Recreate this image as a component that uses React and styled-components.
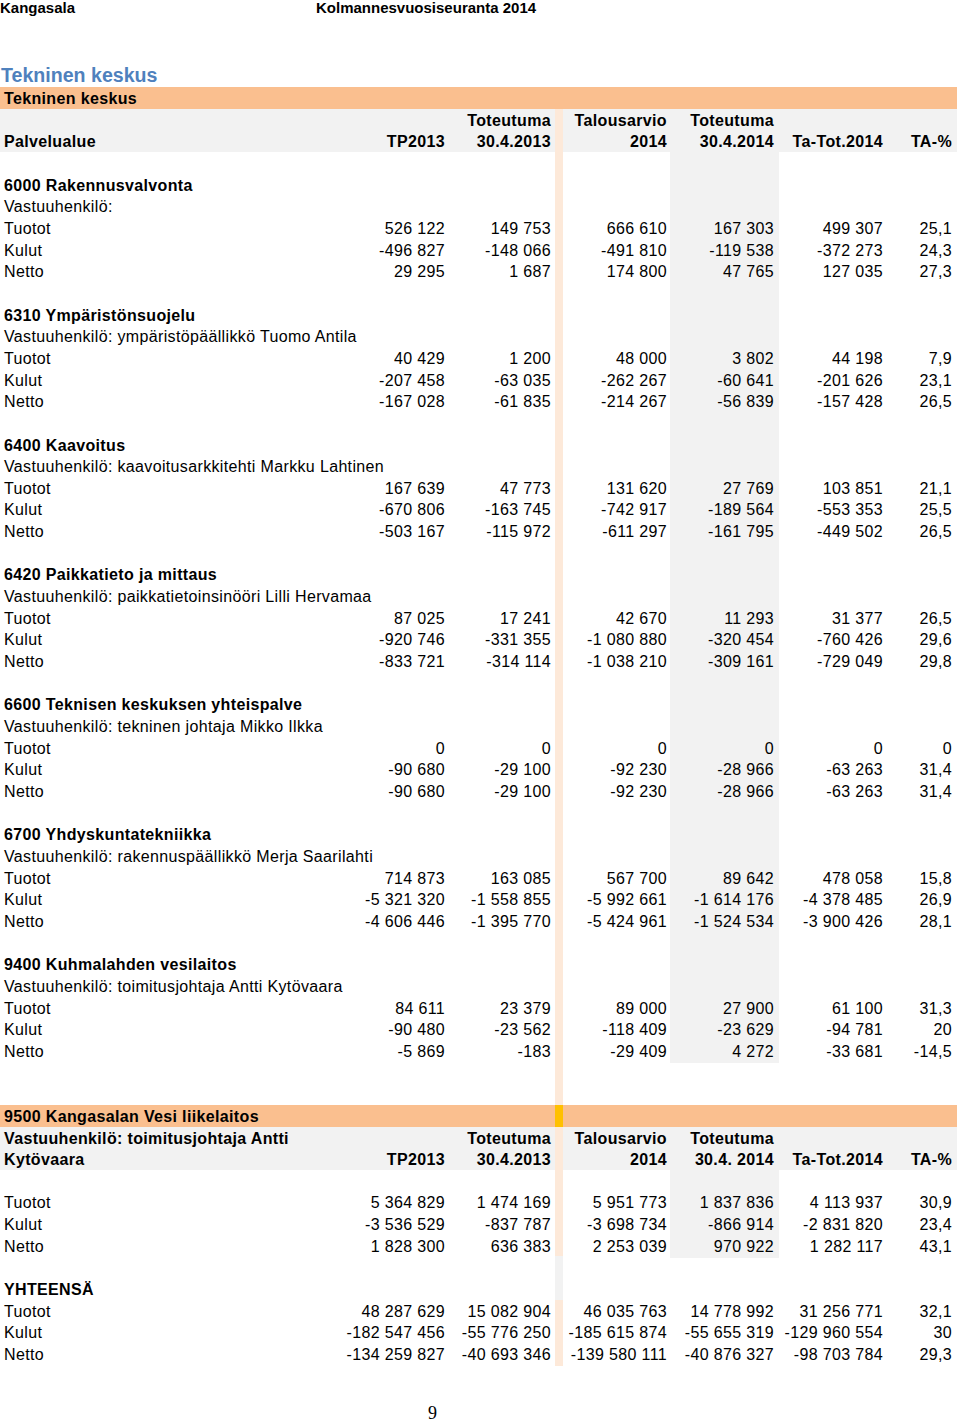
import React from 'react'
import styled, { createGlobalStyle } from 'styled-components'

const GlobalStyle = createGlobalStyle`
  body {
    margin: 0;
    background: #fff;
    color: #000;
    font-family: "Liberation Sans", Arial, sans-serif;
  }
`

const ROW_H = '21.67px'
const PEACH = '#fde9d9'
const ORANGE = '#fabf8f'
const GOLD = '#ffc000'
const GREY = '#f2f2f2'
const PADS = [4, 4, 3, 5, 4, 5]

const Page = styled.div`
  width: 960px;
  min-height: 1421px;
`

const TopBar = styled.div`
  display: grid;
  grid-template-columns: 316px auto;
  font-size: 15px;
  font-weight: 700;
  line-height: 15px;
`

const Title = styled.h1`
  margin: 49px 0 0 1px;
  font-size: 19.6px;
  line-height: 23px;
  font-weight: 700;
  color: #4f81bd;
`

const Sheet = styled.div`
  width: 957px;
  font-size: 16px;
  letter-spacing: 0.35px;
`

const Line = styled.div`
  display: grid;
  grid-template-columns: 340px 109px 106px 8px 107px 109px 108px 70px;
  height: ${ROW_H};
  line-height: 23px;
  background: ${p => (p.$kind === 'band' ? ORANGE : p.$kind === 'head' ? GREY : 'transparent')};
  font-weight: ${p => (p.$kind === 'data' ? 400 : 700)};
`

const Label = styled.div`
  padding-left: 4px;
  white-space: nowrap;
  font-weight: ${p => (p.$bold ? 700 : 'inherit')};
`

const Value = styled.div`
  text-align: right;
  white-space: nowrap;
  padding-right: ${p => p.$pad}px;
  background: ${p => (p.$shade ? GREY : 'transparent')};
`

const Strip = styled.div`
  background: ${p => p.$tone};
`

const PageNumber = styled.div`
  margin-top: 38px;
  padding-left: 428px;
  font-family: "Liberation Serif", "Times New Roman", serif;
  font-size: 18px;
  line-height: 20px;
`

function SheetRow ({ label = '', values = [], kind = 'data', bold, shade, tone = PEACH }) {
  const cells = [0, 1, 2, 3, 4, 5].map(i => values[i] ?? '')
  return (
    <Line $kind={kind}>
      <Label $bold={bold}>{label}</Label>
      <Value $pad={PADS[0]}>{cells[0]}</Value>
      <Value $pad={PADS[1]}>{cells[1]}</Value>
      <Strip $tone={tone} />
      <Value $pad={PADS[2]}>{cells[2]}</Value>
      <Value $pad={PADS[3]} $shade={shade && kind === 'data'}>{cells[3]}</Value>
      <Value $pad={PADS[4]}>{cells[4]}</Value>
      <Value $pad={PADS[5]}>{cells[5]}</Value>
    </Line>
  )
}

const sections = [
  {
    title: '6000 Rakennusvalvonta',
    person: 'Vastuuhenkilö:',
    rows: [
      ['Tuotot', '526 122', '149 753', '666 610', '167 303', '499 307', '25,1'],
      ['Kulut', '-496 827', '-148 066', '-491 810', '-119 538', '-372 273', '24,3'],
      ['Netto', '29 295', '1 687', '174 800', '47 765', '127 035', '27,3']
    ]
  },
  {
    title: '6310 Ympäristönsuojelu',
    person: 'Vastuuhenkilö: ympäristöpäällikkö Tuomo Antila',
    rows: [
      ['Tuotot', '40 429', '1 200', '48 000', '3 802', '44 198', '7,9'],
      ['Kulut', '-207 458', '-63 035', '-262 267', '-60 641', '-201 626', '23,1'],
      ['Netto', '-167 028', '-61 835', '-214 267', '-56 839', '-157 428', '26,5']
    ]
  },
  {
    title: '6400 Kaavoitus',
    person: 'Vastuuhenkilö: kaavoitusarkkitehti Markku Lahtinen',
    rows: [
      ['Tuotot', '167 639', '47 773', '131 620', '27 769', '103 851', '21,1'],
      ['Kulut', '-670 806', '-163 745', '-742 917', '-189 564', '-553 353', '25,5'],
      ['Netto', '-503 167', '-115 972', '-611 297', '-161 795', '-449 502', '26,5']
    ]
  },
  {
    title: '6420 Paikkatieto ja mittaus',
    person: 'Vastuuhenkilö: paikkatietoinsinööri Lilli Hervamaa',
    rows: [
      ['Tuotot', '87 025', '17 241', '42 670', '11 293', '31 377', '26,5'],
      ['Kulut', '-920 746', '-331 355', '-1 080 880', '-320 454', '-760 426', '29,6'],
      ['Netto', '-833 721', '-314 114', '-1 038 210', '-309 161', '-729 049', '29,8']
    ]
  },
  {
    title: '6600 Teknisen keskuksen yhteispalve',
    person: 'Vastuuhenkilö: tekninen johtaja Mikko Ilkka',
    rows: [
      ['Tuotot', '0', '0', '0', '0', '0', '0'],
      ['Kulut', '-90 680', '-29 100', '-92 230', '-28 966', '-63 263', '31,4'],
      ['Netto', '-90 680', '-29 100', '-92 230', '-28 966', '-63 263', '31,4']
    ]
  },
  {
    title: '6700 Yhdyskuntatekniikka',
    person: 'Vastuuhenkilö: rakennuspäällikkö Merja Saarilahti',
    rows: [
      ['Tuotot', '714 873', '163 085', '567 700', '89 642', '478 058', '15,8'],
      ['Kulut', '-5 321 320', '-1 558 855', '-5 992 661', '-1 614 176', '-4 378 485', '26,9'],
      ['Netto', '-4 606 446', '-1 395 770', '-5 424 961', '-1 524 534', '-3 900 426', '28,1']
    ]
  },
  {
    title: '9400 Kuhmalahden vesilaitos',
    person: 'Vastuuhenkilö: toimitusjohtaja Antti Kytövaara',
    rows: [
      ['Tuotot', '84 611', '23 379', '89 000', '27 900', '61 100', '31,3'],
      ['Kulut', '-90 480', '-23 562', '-118 409', '-23 629', '-94 781', '20'],
      ['Netto', '-5 869', '-183', '-29 409', '4 272', '-33 681', '-14,5']
    ]
  }
]

const vesi = [
  ['Tuotot', '5 364 829', '1 474 169', '5 951 773', '1 837 836', '4 113 937', '30,9'],
  ['Kulut', '-3 536 529', '-837 787', '-3 698 734', '-866 914', '-2 831 820', '23,4'],
  ['Netto', '1 828 300', '636 383', '2 253 039', '970 922', '1 282 117', '43,1']
]

const totals = [
  ['Tuotot', '48 287 629', '15 082 904', '46 035 763', '14 778 992', '31 256 771', '32,1'],
  ['Kulut', '-182 547 456', '-55 776 250', '-185 615 874', '-55 655 319', '-129 960 554', '30'],
  ['Netto', '-134 259 827', '-40 693 346', '-139 580 111', '-40 876 327', '-98 703 784', '29,3']
]

export default function App () {
  return (
    <Page>
      <GlobalStyle />
      <TopBar>
        <span>Kangasala</span>
        <span>Kolmannesvuosiseuranta 2014</span>
      </TopBar>
      <Title>Tekninen keskus</Title>
      <Sheet>
        <SheetRow kind='band' label='Tekninen keskus' tone='transparent' />
        <SheetRow kind='head' values={['', 'Toteutuma', 'Talousarvio', 'Toteutuma']} />
        <SheetRow kind='head' label='Palvelualue' values={['TP2013', '30.4.2013', '2014', '30.4.2014', 'Ta-Tot.2014', 'TA-%']} />
        <SheetRow shade />
        {sections.map(s => (
          <React.Fragment key={s.title}>
            <SheetRow shade bold label={s.title} />
            <SheetRow shade label={s.person} />
            {s.rows.map(([label, ...values]) => (
              <SheetRow shade key={label} label={label} values={values} />
            ))}
            <SheetRow shade={s.title[0] !== '9'} />
          </React.Fragment>
        ))}
        <SheetRow />
        <SheetRow kind='band' label='9500 Kangasalan Vesi liikelaitos' tone={GOLD} />
        <SheetRow kind='head' label='Vastuuhenkilö: toimitusjohtaja Antti' values={['', 'Toteutuma', 'Talousarvio', 'Toteutuma']} />
        <SheetRow kind='head' label='Kytövaara' values={['TP2013', '30.4.2013', '2014', '30.4. 2014', 'Ta-Tot.2014', 'TA-%']} />
        <SheetRow shade />
        {vesi.map(([label, ...values]) => (
          <SheetRow shade key={label} label={label} values={values} />
        ))}
        <SheetRow tone={GREY} />
        <SheetRow bold label='YHTEENSÄ' tone={GREY} />
        {totals.map(([label, ...values]) => (
          <SheetRow key={label} label={label} values={values} />
        ))}
      </Sheet>
      <PageNumber>9</PageNumber>
    </Page>
  )
}
